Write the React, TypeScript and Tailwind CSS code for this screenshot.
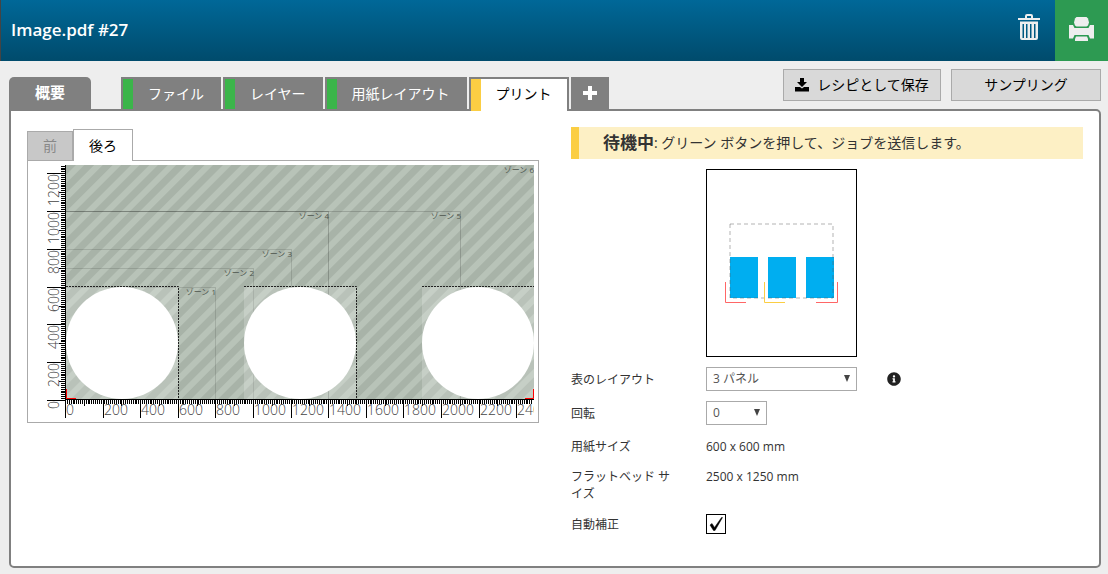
import { useState } from "react";
import type { ReactNode } from "react";
import { FaInfoCircle } from "react-icons/fa";
import clsx from "clsx";

const jobTabs = [
  { id: "file", label: "ファイル" },
  { id: "layers", label: "レイヤー" },
  { id: "sheet", label: "用紙レイアウト" },
  { id: "print", label: "プリント" },
];

// Flatbed preview geometry, in px; the scale is px per 100 mm
const ORIGIN_X = 38;
const ORIGIN_Y = 239;
const SCALE_X = 18.8;
const SCALE_Y = 18.9;
const BED_RIGHT = 506;
const BED_TOP = 4;

const mmX = (mm: number) => Math.round(ORIGIN_X + (mm / 100) * SCALE_X);
const mmY = (mm: number) => Math.round(ORIGIN_Y - (mm / 100) * SCALE_Y);

const zones = [
  { label: "ゾーン 1", width: 800, height: 600, opacity: 0.12 },
  { label: "ゾーン 2", width: 1000, height: 700, opacity: 0.12 },
  { label: "ゾーン 3", width: 1200, height: 800, opacity: 0.12 },
  { label: "ゾーン 4", width: 1400, height: 1000, opacity: 0.2 },
  { label: "ゾーン 5", width: 2100, height: 1000, opacity: 0.16 },
];

const panelOffsets = [38, 216, 394];

const range = (from: number, to: number, step: number) => {
  const out: number[] = [];
  for (let v = from; v <= to; v += step) out.push(v);
  return out;
};

const tickLength = (mm: number) => {
  if (mm % 200 === 0) return 18;
  if (mm % 100 === 0) return 6;
  return 4;
};

const TrashIcon = () => (
  <svg width="24" height="28" viewBox="0 0 24 28" aria-hidden="true">
    <path
      d="M1 5h7V3q0-2 2-2h4q2 0 2 2v2h7v2H1zM10 5h4V3h-4z"
      fill="#eee"
      fillRule="evenodd"
    />
    <path
      d="M3 8.500h18V25q0 2-2 2H5q-2 0-2-2zM5.500 11v14H7V11zM9 11v14h1.500V11zM13 11v14h1.500V11zM17 11v14h1.500V11z"
      fill="#eee"
      fillRule="evenodd"
    />
  </svg>
);

const PrinterIcon = () => (
  <svg width="25" height="24" viewBox="0 0 25 24" aria-hidden="true">
    <path d="M7.500 0h10l1.500 1.500 1 4-1 3-1.500 1h-10L6 8.500l-1-3 1-4z" fill="#eee" />
    <path d="M0 8h4l1.500 3h14L21 8h4v13.500h-4L19.500 18h-14L4 21.500H0z" fill="#eee" />
    <path d="M7 19.500h11l1 2.500v2H6v-2z" fill="#eee" />
  </svg>
);

const SaveIcon = () => (
  <svg width="14" height="14" viewBox="0 0 14 14" aria-hidden="true">
    <path d="M5 0h4v4h3L7 9 2 4h3z" fill="#000" />
    <path d="M0 9h5l2 1.500L9 9h5v4.500H0z" fill="#000" />
  </svg>
);

const Header = () => (
  <header className="flex h-[61px] items-stretch border-l border-[#444] bg-linear-to-b from-[#006898] to-[#004b6c]">
    <h1 className="flex flex-1 items-center pb-0.5 pl-[10px] text-[17px] font-semibold text-white">
      Image.pdf #27
    </h1>
    <button type="button" aria-label="削除" className="flex w-[52px] items-center justify-center pb-2">
      <TrashIcon />
    </button>
    <button
      type="button"
      aria-label="プリント"
      className="flex w-[53px] items-center justify-center bg-[#2d9a52] pb-1"
    >
      <PrinterIcon />
    </button>
  </header>
);

const ActionButton = ({ children, className }: { children: ReactNode; className?: string }) => (
  <button
    type="button"
    className={clsx(
      "flex h-8 items-center justify-center gap-2 border border-[#aaa] bg-[#d9d9d9] text-sm text-black",
      className
    )}
  >
    {children}
  </button>
);

const Toolbar = ({ active, onSelect }: { active: string; onSelect: (id: string) => void }) => (
  <div className="flex h-12 items-end justify-between pr-[7px] pl-[9px]">
    <nav className="flex items-end text-sm">
      <button
        type="button"
        className="h-8 w-[82px] rounded-t-[5px] bg-[#808080] text-[15px] font-bold text-white"
      >
        概要
      </button>
      <div className="ml-[30px] flex gap-0.5">
        {jobTabs.map((tab) => {
          const isActive = tab.id === active;
          return (
            <button
              key={tab.id}
              type="button"
              onClick={() => onSelect(tab.id)}
              className={clsx(
                "flex border-x-2 border-t-2 border-[#808080]",
                isActive ? "z-10 -mb-0.5 h-[34px] bg-white text-black" : "h-8 bg-[#808080] text-white"
              )}
            >
              <span
                className={clsx(
                  "w-[10px] self-stretch",
                  isActive ? "bg-[#fbce43]" : "bg-[#3bb54a]"
                )}
              />
              <span className="px-[15px] leading-[30px]">{tab.label}</span>
            </button>
          );
        })}
        <button
          type="button"
          aria-label="追加"
          className="flex h-8 w-[38px] items-center justify-center bg-[#808080]"
        >
          <svg width="14" height="14" viewBox="0 0 14 14" aria-hidden="true">
            <path d="M5 0h4v5h5v4H9v5H5V9H0V5h5z" fill="#fff" />
          </svg>
        </button>
      </div>
    </nav>
    <div className="flex gap-[10px] pb-2">
      <ActionButton className="w-[158px]">
        <SaveIcon />
        レシピとして保存
      </ActionButton>
      <ActionButton className="w-[150px]">サンプリング</ActionButton>
    </div>
  </div>
);

const Rulers = () => (
  <g fill="#444" fontSize="14" fontWeight="300">
    {range(0, 2480, 10).map((mm) => (
      <rect key={mm} x={mmX(mm) - 1} y={ORIGIN_Y} width="1" height={tickLength(mm)} fill="#000" />
    ))}
    {range(0, 1240, 10).map((mm) => (
      <rect
        key={mm}
        x={ORIGIN_X - 1 - tickLength(mm)}
        y={mmY(mm)}
        width={tickLength(mm)}
        height="1"
        fill="#000"
      />
    ))}
    <rect x={ORIGIN_X - 1} y={BED_TOP} width="1" height="253" fill="#000" />
    <rect x={ORIGIN_X - 1} y={ORIGIN_Y - 1} width="469" height="1" fill="#000" />
    {range(0, 2400, 200).map((mm) => (
      <text key={mm} x={mmX(mm)} y={ORIGIN_Y + 15}>
        {mm}
      </text>
    ))}
    {range(0, 1200, 200).map((mm) => (
      <text
        key={mm}
        textAnchor="end"
        transform={`translate(${ORIGIN_X - 7} ${mmY(mm) + 1}) rotate(-90)`}
      >
        {mm}
      </text>
    ))}
  </g>
);

const FlatbedPreview = () => (
  <svg viewBox="0 0 510 261" className="block w-full" role="img" aria-label="フラットベッド">
    <defs>
      <pattern
        id="stripes"
        width="13"
        height="13"
        patternUnits="userSpaceOnUse"
        patternTransform="translate(38 4) rotate(45)"
      >
        <rect width="13" height="13" fill="#b8c3b8" />
        <rect width="7" height="13" fill="#a8b3a8" />
      </pattern>
      <clipPath id="bed">
        <rect x="0" y="0" width={BED_RIGHT} height="261" />
      </clipPath>
    </defs>
    <g clipPath="url(#bed)">
      <rect
        x={ORIGIN_X}
        y={BED_TOP}
        width={BED_RIGHT - ORIGIN_X}
        height={ORIGIN_Y - BED_TOP - 1}
        fill="url(#stripes)"
      />
      {zones.map((zone) => (
        <g key={zone.label}>
          <path
            d={`M${ORIGIN_X} ${mmY(zone.height) + 0.5}H${mmX(zone.width) - 0.5}V${ORIGIN_Y}`}
            fill="none"
            stroke="#000"
            strokeOpacity={zone.opacity}
          />
          <text
            x={mmX(zone.width)}
            y={mmY(zone.height) + 8}
            fontSize="8"
            textAnchor="end"
            fill="#4d554d"
          >
            {zone.label}
          </text>
        </g>
      ))}
      <text x={BED_RIGHT} y={BED_TOP + 8} fontSize="8" textAnchor="end" fill="#4d554d">
        ゾーン 6
      </text>
      {panelOffsets.map((x) => (
        <g key={x}>
          <rect x={x} y="126" width="112" height="112" fill="#fff" fillOpacity="0.2" />
          <circle cx={x + 56} cy="182" r="56" fill="#fff" />
          <path
            d={`M${x} 125.500H${x + 112.5}V238`}
            fill="none"
            stroke="#222"
            strokeDasharray="2 1"
          />
        </g>
      ))}
      <path d="M38.500 228V237.500H48M505.500 228V237.500H497" fill="none" stroke="#f00" />
      <Rulers />
    </g>
  </svg>
);

const SidePreview = () => {
  const [side, setSide] = useState("back");
  const tabClass = (id: string) =>
    id === side
      ? "z-10 -mb-px h-8 w-[60px] border border-b-0 border-[#aaa] bg-white text-black"
      : "h-[29px] w-[46px] border border-b-0 border-[#aaa] bg-[#c8c8c8] text-[#888]";

  return (
    <section>
      <div className="mt-0.5 flex items-end text-sm">
        <button type="button" className={tabClass("front")} onClick={() => setSide("front")}>
          前
        </button>
        <button type="button" className={tabClass("back")} onClick={() => setSide("back")}>
          後ろ
        </button>
      </div>
      <div className="border border-[#aaa]">
        <FlatbedPreview />
      </div>
    </section>
  );
};

const TableLayoutDiagram = () => (
  <svg width="149" height="186" viewBox="0 0 149 186" aria-hidden="true">
    {[23, 61, 99].map((x) => (
      <rect key={x} x={x} y="87" width="28" height="41" fill="#00aef0" />
    ))}
    <rect
      x="23"
      y="54"
      width="103"
      height="74"
      fill="none"
      stroke="#555"
      strokeOpacity="0.45"
      strokeDasharray="4 3"
    />
    <path d="M18.500 112V132.500H39M130.500 112V132.500H109" fill="none" stroke="#f66" />
    <path d="M57.500 112V132.500H78" fill="none" stroke="#fbce43" />
  </svg>
);

const SelectBox = ({ id, options, className }: { id: string; options: string[]; className: string }) => (
  <span className={clsx("relative block", className)}>
    <select
      id={id}
      className="block h-6 w-full appearance-none border border-[#aaa] bg-white pl-1.5 text-xs text-[#555]"
    >
      {options.map((option) => (
        <option key={option}>{option}</option>
      ))}
    </select>
    <svg
      width="6"
      height="7"
      viewBox="0 0 6 7"
      className="pointer-events-none absolute top-2 right-[7px]"
      aria-hidden="true"
    >
      <path d="M0 0h6L3 7z" fill="#444" />
    </svg>
  </span>
);

const labelClass = "w-[135px] shrink-0 pr-7";

const PrintSettings = () => {
  const [autoCorrect, setAutoCorrect] = useState(true);

  return (
    <section className="text-xs leading-[17px] text-[#333]">
      <p className="flex h-8 items-center border-l-8 border-[#fbce43] bg-[#fdf0c5] pl-6 text-sm">
        <strong className="text-[17px] font-bold">待機中</strong>
        <span className="whitespace-pre">: グリーン ボタンを押して、ジョブを送信します。</span>
      </p>
      <div className="mt-[10px] ml-[135px] w-[151px] border border-black">
        <TableLayoutDiagram />
      </div>
      <div className="mt-[10px] flex items-center">
        <label htmlFor="table-layout" className={labelClass}>
          表のレイアウト
        </label>
        <SelectBox id="table-layout" options={["3 パネル", "2 パネル", "1 パネル"]} className="w-[151px]" />
        <FaInfoCircle size={14} className="ml-[30px] text-[#222]" />
      </div>
      <div className="mt-[10px] flex items-center">
        <label htmlFor="rotation" className={labelClass}>
          回転
        </label>
        <SelectBox id="rotation" options={["0", "90", "180", "270"]} className="w-[61px]" />
      </div>
      <dl>
        <div className="mt-[13px] flex">
          <dt className={labelClass}>用紙サイズ</dt>
          <dd>600 x 600 mm</dd>
        </div>
        <div className="mt-[13px] flex">
          <dt className={labelClass}>フラットベッド サイズ</dt>
          <dd>2500 x 1250 mm</dd>
        </div>
      </dl>
      <div className="mt-3 flex items-center">
        <label htmlFor="auto-correct" className={labelClass}>
          自動補正
        </label>
        <span className="relative block size-5">
          <input
            id="auto-correct"
            type="checkbox"
            checked={autoCorrect}
            onChange={(e) => setAutoCorrect(e.target.checked)}
            className="block size-5 appearance-none border border-black bg-white"
          />
          {autoCorrect && (
            <svg
              width="20"
              height="20"
              viewBox="0 0 20 20"
              className="pointer-events-none absolute inset-0"
              aria-hidden="true"
            >
              <path d="M4 11l2-1.500 2.500 4L15.500 3.500h1L9 16.500H7.500z" fill="#000" stroke="#000" strokeWidth="0.5" />
            </svg>
          )}
        </span>
      </div>
    </section>
  );
};

const App = () => {
  const [activeTab, setActiveTab] = useState("print");

  return (
    <div className="min-h-screen bg-[#eee] pb-1.5 font-['Open_Sans','Noto_Sans_CJK_JP',sans-serif]">
      <Header />
      <Toolbar active={activeTab} onSelect={setActiveTab} />
      <main className="mr-[7px] ml-[9px] grid grid-cols-2 gap-8 rounded-[5px] rounded-tl-none border-2 border-[#808080] bg-white px-4 pt-4 pb-8">
        <SidePreview />
        <PrintSettings />
      </main>
    </div>
  );
};

export default App;
